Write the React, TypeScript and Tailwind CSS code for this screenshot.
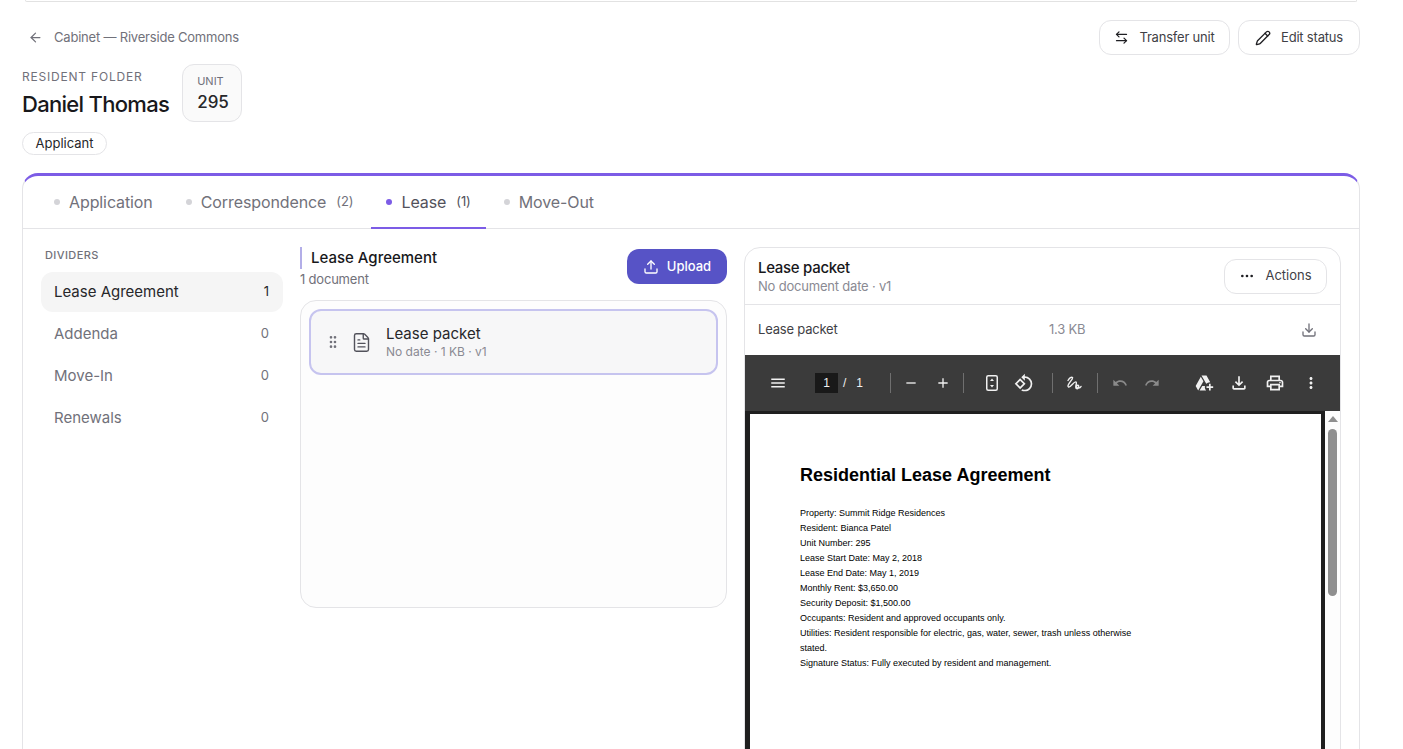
import { ArrowLeft, ArrowLeftRight, Download, Ellipsis, FileText, GripVertical, Pencil, Upload } from 'lucide-react';
import { MdAdd, MdMenu, MdMoreVert, MdOutlineAddToDrive, MdOutlineFileDownload, MdOutlinePrint, MdOutlineRotate90DegreesCcw, MdRedo, MdRemove, MdUndo } from 'react-icons/md';

const tabs = [
    { label: 'Application', count: '', active: false },
    { label: 'Correspondence', count: '(2)', active: false },
    { label: 'Lease', count: '(1)', active: true },
    { label: 'Move-Out', count: '', active: false },
];

const dividers = [
    { label: 'Lease Agreement', count: 1, active: true },
    { label: 'Addenda', count: 0, active: false },
    { label: 'Move-In', count: 0, active: false },
    { label: 'Renewals', count: 0, active: false },
];

const leaseLines = [
    'Property: Summit Ridge Residences',
    'Resident: Bianca Patel',
    'Unit Number: 295',
    'Lease Start Date: May 2, 2018',
    'Lease End Date: May 1, 2019',
    'Monthly Rent: $3,650.00',
    'Security Deposit: $1,500.00',
    'Occupants: Resident and approved occupants only.',
    'Utilities: Resident responsible for electric, gas, water, sewer, trash unless otherwise stated.',
    'Signature Status: Fully executed by resident and management.',
];

function PdfToolbar() {
    return (
        <div className="h-[56px] shrink-0 bg-[#3b3b3b] flex items-center text-[#f1f1f1] pl-[24px]">
            <MdMenu size={18} />
            <div className="ml-[28px] w-[23px] h-[20px] bg-[#191919] flex items-center justify-center text-[12px] font-['Liberation_Sans',sans-serif]">1</div>
            <span className="ml-[5px] text-[12px] font-['Liberation_Sans',sans-serif]">/</span>
            <span className="ml-[10px] text-[12px] font-['Liberation_Sans',sans-serif]">1</span>
            <div className="ml-[27px] w-px h-[20px] bg-[#6f6f6f]" />
            <MdRemove size={16} className="ml-[12px]" />
            <MdAdd size={16} className="ml-[16px]" />
            <div className="ml-[12px] w-px h-[20px] bg-[#6f6f6f]" />
            <svg width="12" height="16" viewBox="0 0 12 16" fill="none" className="ml-[22px]">
                <rect x="0.75" y="0.75" width="10.5" height="14.5" rx="1.5" stroke="currentColor" strokeWidth="1.5" />
                <path d="M6 3.5 8 6H4zM6 12.5 4 10h4z" fill="currentColor" />
            </svg>
            <MdOutlineRotate90DegreesCcw size={20} className="ml-[16px]" />
            <div className="ml-[18px] w-px h-[20px] bg-[#6f6f6f]" />
            <svg width="16" height="16" viewBox="0 0 16 16" fill="none" className="ml-[14px]">
                <path d="M1 5.5C2.5 3 4.5 1.5 5.5 2.5 6.5 4-1 10.5 1.5 12 3.5 13 7 6 9 7c1.5.8-1.5 5 .3 6.5 1.5 1 3-1.5 2.2-3-.8-1.2-3.5 1.5-1 2.5 1.500.4 3-.4 3.500-1.500" stroke="currentColor" strokeWidth="1.4" strokeLinecap="round" />
            </svg>
            <div className="ml-[14px] w-px h-[20px] bg-[#6f6f6f]" />
            <MdUndo size={16} className="ml-[14px] text-[#8a8a8a]" />
            <MdRedo size={16} className="ml-[16px] text-[#8a8a8a]" />
            <MdOutlineAddToDrive size={20} className="ml-[34px]" />
            <MdOutlineFileDownload size={20} className="ml-[15px]" />
            <MdOutlinePrint size={20} className="ml-[16px]" />
            <MdMoreVert size={18} className="ml-[17px]" />
        </div>
    );
}

export default function App() {
    return (
        <div className="h-[749px] overflow-hidden bg-white pl-[22px] pr-[43px] text-[#1f1f23] font-['Inter',sans-serif]">
            {/* Cut-off card above the fold */}
            <div className="mx-[3px] h-[2px] border-b border-x border-[#e2e2e2] rounded-b-lg" />

            {/* Breadcrumb + actions */}
            <div className="mt-[18px] h-[35px] flex items-center justify-between">
                <div className="flex items-center gap-[11px] pl-[6px] text-[13px] text-[#71717a] tracking-[-0.2px]">
                    <ArrowLeft size={15} />
                    <span>Cabinet — Riverside Commons</span>
                </div>
                <div className="flex items-center gap-2">
                    <button className="w-[131px] h-[35px] flex items-center justify-center gap-[10px] border border-[#e4e4e7] rounded-xl text-[13px] text-[#3f3f46] tracking-[-0.2px]">
                        <ArrowLeftRight size={15} className="text-[#1f1f23]" />
                        Transfer unit
                    </button>
                    <button className="w-[122px] h-[35px] flex items-center justify-center gap-[10px] border border-[#e4e4e7] rounded-xl text-[13px] text-[#3f3f46] tracking-[-0.2px]">
                        <Pencil size={16} className="text-[#1f1f23]" />
                        Edit status
                    </button>
                </div>
            </div>

            {/* Resident header */}
            <div className="mt-[9px] flex items-start gap-[13px]">
                <div className="pt-[5px]">
                    <div className="text-[12px] leading-[16px] tracking-[0.8px] text-[#71717a]">RESIDENT FOLDER</div>
                    <div className="mt-[4px] text-[22px] leading-[30px] font-medium tracking-[-0.7px] text-[#18181b]">Daniel Thomas</div>
                </div>
                <div className="w-[60px] h-[58px] border border-[#e4e4e7] rounded-xl bg-[#fafafa] pl-[14px] pt-[9px]">
                    <div className="text-[11px] leading-[14px] text-[#71717a]">UNIT</div>
                    <div className="mt-[3px] text-[17px] leading-[22px] font-medium text-[#27272a]">295</div>
                </div>
            </div>
            <div className="mt-[10px] w-[85px] h-[23px] flex items-center justify-center border border-[#e4e4e7] rounded-full text-[13px] text-[#27272a]">Applicant</div>

            {/* Folder card */}
            <div className="mt-[18px] h-[600px] border border-[#e4e4e7] border-t-[3px] border-t-[#7c5ce6] rounded-2xl">
                <div className="h-[53px] flex items-stretch gap-[3px] pl-[16px] border-b border-[#e4e4e7]">
                    {tabs.map((tab) => (
                        <div
                            key={tab.label}
                            className={`px-[15px] flex items-center gap-[9px] text-[16px] tracking-[-0.1px] border-b-2 -mb-px ${tab.active ? 'border-[#7c5ce6] text-[#52525b]' : 'border-transparent text-[#71717a]'}`}
                        >
                            <span className={`w-[6px] h-[6px] rounded-full ${tab.active ? 'bg-[#7c5ce6]' : 'bg-[#d4d4d8]'}`} />
                            <span>{tab.label}</span>
                            {tab.count && <span className="text-[13px] ml-[1px]">{tab.count}</span>}
                        </div>
                    ))}
                </div>

                <div className="flex pl-[18px] pr-[18px] pt-[18px]">
                    {/* Dividers */}
                    <div className="w-[242px] shrink-0">
                        <div className="pl-[4px] text-[11px] leading-[16px] font-medium tracking-[0.4px] text-[#71717a]">DIVIDERS</div>
                        <div className="mt-[9px] flex flex-col gap-[2px]">
                            {dividers.map((item) => (
                                <div
                                    key={item.label}
                                    className={`h-[40px] flex items-center justify-between pl-[13px] pr-[14px] rounded-xl text-[15px] ${item.active ? 'bg-[#f5f5f5] text-[#27272a]' : 'text-[#71717a]'}`}
                                >
                                    <span>{item.label}</span>
                                    <span className="text-[13px]">{item.count}</span>
                                </div>
                            ))}
                        </div>
                    </div>

                    {/* Documents */}
                    <div className="ml-[17px] w-[427px] shrink-0">
                        <div className="h-[53px] flex items-start justify-between">
                            <div>
                                <div className="h-[22px] border-l-2 border-[#b3aee8] pl-[9px] text-[15px] leading-[22px] font-medium text-[#18181b]">Lease Agreement</div>
                                <div className="mt-[1px] text-[13px] leading-[18px] text-[#71717a] tracking-[-0.2px]">1 document</div>
                            </div>
                            <button className="mt-[2px] w-[100px] h-[35px] flex items-center justify-center gap-[8px] rounded-xl bg-[#5753c6] text-white text-[13px] font-medium">
                                <Upload size={16} />
                                Upload
                            </button>
                        </div>
                        <div className="h-[308px] border border-[#e4e4e7] rounded-2xl bg-[#fdfdfd] p-[8px]">
                            <div className="h-[66px] flex items-center border-2 border-[#c6c4ef] rounded-xl bg-[#f7f7f8] pl-[14px]">
                                <GripVertical size={16} className="text-[#71717a]" />
                                <FileText size={21} strokeWidth={1.6} className="ml-[10px] text-[#52525b]" />
                                <div className="ml-[14px]">
                                    <div className="text-[15px] leading-[20px] text-[#27272a]">Lease packet</div>
                                    <div className="text-[12px] leading-[16px] text-[#8a8a93]">No date · 1 KB · v1</div>
                                </div>
                            </div>
                        </div>
                    </div>

                    {/* Preview */}
                    <div className="ml-[17px] w-[597px] h-[560px] shrink-0 border border-[#e4e4e7] rounded-t-2xl flex flex-col overflow-hidden">
                        <div className="h-[57px] shrink-0 flex items-center justify-between pl-[13px] pr-[13px] border-b border-[#e4e4e7]">
                            <div>
                                <div className="text-[15px] leading-[20px] font-medium tracking-[-0.3px] text-[#18181b]">Lease packet</div>
                                <div className="text-[13px] leading-[17px] tracking-[-0.2px] text-[#8a8a93]">No document date · v1</div>
                            </div>
                            <button className="w-[103px] h-[35px] flex items-center justify-center gap-[10px] border border-[#e4e4e7] rounded-xl text-[13px] text-[#3f3f46]">
                                <Ellipsis size={16} className="text-[#1f1f23]" />
                                Actions
                            </button>
                        </div>
                        <div className="h-[50px] shrink-0 flex items-center pl-[13px] pr-[23px] text-[13px] tracking-[-0.2px]">
                            <span className="w-[291px] text-[#3f3f46]">Lease packet</span>
                            <span className="text-[#8a8a93]">1.3 KB</span>
                            <Download size={16} className="ml-auto text-[#71717a]" />
                        </div>
                        <PdfToolbar />
                        <div className="flex-1 flex bg-[#1f1f1f] pt-[3px] pl-[5px] min-h-0">
                            <div className="w-[571px] bg-white pt-[50px] pl-[50px] pr-[170px] font-['Liberation_Sans',sans-serif] text-black">
                                <div className="text-[18px] leading-[22px] font-bold">Residential Lease Agreement</div>
                                <div className="mt-[20px] text-[9px] leading-[15px]">
                                    {leaseLines.map((line) => (
                                        <div key={line}>{line}</div>
                                    ))}
                                </div>
                            </div>
                            <div className="ml-[4px] flex-1 bg-[#fdfdfd] relative -mt-[3px]">
                                <div className="absolute left-[3px] top-[5px] w-0 h-0 border-x-[5px] border-x-transparent border-b-[6px] border-b-[#8f8f8f]" />
                                <div className="absolute left-[3px] top-[18px] w-[9px] h-[167px] rounded-full bg-[#8f8f8f]" />
                            </div>
                        </div>
                    </div>
                </div>
            </div>
        </div>
    );
}
